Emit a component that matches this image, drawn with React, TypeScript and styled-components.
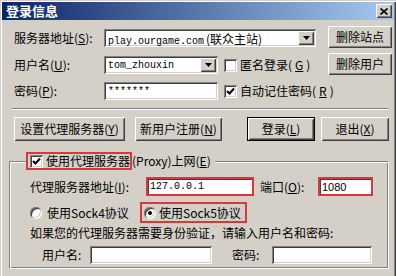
import React from 'react';
import styled, { createGlobalStyle, css } from 'styled-components';

const GlobalStyle = createGlobalStyle`
  html, body {
    margin: 0;
    padding: 0;
    background: #d4d0c8;
  }
  body {
    font-family: "Noto Sans CJK SC", "Liberation Sans", sans-serif;
    font-size: 12px;
    color: #000;
  }
`;

const raised = css`
  background: #d4d0c8;
  box-shadow: inset 1px 1px #fff, inset -1px -1px #404040, inset 2px 2px #d4d0c8,
    inset -2px -2px #808080;
`;

const sunken = css`
  background: #fff;
  box-shadow: inset 1px 1px #808080, inset -1px -1px #fff, inset 2px 2px #404040,
    inset -2px -2px #d4d0c8;
`;

const Window = styled.div`
  width: 396px;
  height: 276px;
  box-sizing: border-box;
  padding: 2px 2px 0;
  background: #d4d0c8;
  box-shadow: inset 1px 1px #d4d0c8, inset 2px 2px #fff, inset -1px 0 #404040,
    inset -2px 0 #808080;
  display: flex;
  flex-direction: column;
  overflow: hidden;
`;

const TitleBar = styled.div`
  height: 18px;
  flex: none;
  display: flex;
  align-items: center;
  justify-content: space-between;
  padding: 0 2px 0 4px;
  background: linear-gradient(to right, #0a246a, #a6caf0);
`;

const Title = styled.span`
  color: #fff;
  font-weight: bold;
  font-size: 13px;
  line-height: 16px;
`;

const CloseButton = styled.div`
  ${raised};
  width: 16px;
  height: 14px;
  display: flex;
  align-items: center;
  justify-content: center;
`;

const Body = styled.div`
  padding: 6px 4px 0 12px;
  display: flex;
  flex-direction: column;
`;

const TopGrid = styled.div`
  display: grid;
  grid-template-columns: 90px 120px 104px 64px;
  grid-template-rows: 24px 24px 22px;
  row-gap: 3px;
  align-items: center;
`;

const Label = styled.span<{ $w?: number; $gap?: number }>`
  display: inline-block;
  flex: none;
  width: ${(p) => (p.$w ? `${p.$w}px` : 'auto')};
  margin-left: ${(p) => p.$gap ?? 0}px;
  line-height: 14px;
  white-space: nowrap;
`;

const Field = styled.div<{ $w: number; $h?: number }>`
  ${sunken};
  box-sizing: border-box;
  flex: none;
  width: ${(p) => p.$w}px;
  height: ${(p) => p.$h ?? 18}px;
  padding: 0 3px 0 4px;
  display: flex;
  align-items: center;
  font-family: "Liberation Mono", "Noto Sans CJK SC", monospace;
  font-size: 10px;
  white-space: nowrap;
  overflow: hidden;
`;

const ComboField = styled(Field)<{ $span?: boolean }>`
  grid-column: ${(p) => (p.$span ? 'span 2' : 'auto')};
  justify-content: space-between;
  padding-right: 2px;
`;

const Cjk = styled.span`
  font-family: "Noto Sans CJK SC", sans-serif;
  font-size: 12px;
  margin-left: 2px;
`;

const DropButton = styled.div`
  ${raised};
  width: 16px;
  height: 14px;
  flex: none;
  display: flex;
  align-items: center;
  justify-content: center;
`;

const RedField = styled(Field)`
  height: 19px;
  border: 2px solid #d6393d;
  box-shadow: inset 1px 1px #404040;
  padding-left: 2px;
`;

const PortText = styled.span`
  font-family: "Liberation Sans", sans-serif;
  font-size: 11px;
`;

const Button = styled.div<{ $w: number; $h?: number; $default?: boolean; $gap?: number }>`
  ${raised};
  box-sizing: border-box;
  flex: none;
  width: ${(p) => p.$w}px;
  height: ${(p) => p.$h ?? 24}px;
  margin-left: ${(p) => p.$gap ?? 0}px;
  display: flex;
  align-items: center;
  justify-content: center;
  line-height: 14px;
  white-space: nowrap;
  ${(p) =>
    p.$default &&
    css`
      box-shadow: inset 0 0 0 1px #000, inset 2px 2px #fff, inset -2px -2px #404040,
        inset 3px 3px #d4d0c8, inset -3px -3px #808080;
    `}
`;

const SideButton = styled(Button)`
  align-self: start;
`;

const CheckOption = styled.label`
  display: flex;
  align-items: center;
  gap: 3px;
  line-height: 14px;
  white-space: nowrap;
`;

const Box = styled.span`
  ${sunken};
  width: 13px;
  height: 13px;
  flex: none;
  display: inline-flex;
  align-items: center;
  justify-content: center;
`;

const Separator = styled.div`
  margin: 6px 0 0 -2px;
  width: 376px;
  height: 0;
  border-top: 1px solid #808080;
  border-bottom: 1px solid #fff;
`;

const ButtonRow = styled.div`
  display: flex;
  margin-top: 7px;
`;

const Group = styled.fieldset`
  margin: 11px 0 0 -5px;
  padding: 0;
  width: 380px;
  box-sizing: border-box;
  border: 1px solid;
  border-color: #808080 #fff #fff #808080;
  box-shadow: inset 1px 1px #fff, inset -1px -1px #808080;
`;

const Legend = styled.legend`
  margin-left: 16px;
  padding: 0 4px 0 0;
  background: #d4d0c8;
  display: flex;
  align-items: center;
  line-height: 14px;
  white-space: nowrap;
`;

const RedBox = styled.span<{ $pad?: number }>`
  display: inline-flex;
  align-items: center;
  box-sizing: border-box;
  height: ${(p) => (p.$pad ? 21 : 18)}px;
  border: 2px solid #d6393d;
  padding: 0 ${(p) => p.$pad ?? 0}px 0 2px;
  gap: 3px;
`;

const Inner = styled.div`
  padding: 7px 0 4px 20px;
  display: flex;
  flex-direction: column;
`;

const Row = styled.div<{ $top?: number; $indent?: number }>`
  display: flex;
  align-items: center;
  margin-top: ${(p) => p.$top ?? 0}px;
  padding-left: ${(p) => p.$indent ?? 0}px;
`;

const RadioOption = styled.span<{ $w?: number }>`
  display: inline-flex;
  align-items: center;
  gap: 5px;
  width: ${(p) => (p.$w ? `${p.$w}px` : 'auto')};
  line-height: 14px;
  white-space: nowrap;
`;

const Radio = styled.span`
  width: 12px;
  height: 12px;
  flex: none;
  border-radius: 50%;
  background: #fff;
  box-shadow: inset 1px 1px #808080, inset -1px -1px #fff, inset 2px 2px #404040,
    inset -2px -2px #d4d0c8;
  display: inline-flex;
  align-items: center;
  justify-content: center;
`;

const Dot = styled.span`
  width: 4px;
  height: 4px;
  border-radius: 50%;
  background: #000;
`;

const Hint = styled.div`
  margin-top: 3px;
  line-height: 14px;
  white-space: nowrap;
`;

const Check = () => (
  <svg width="9" height="9" viewBox="0 0 9 9">
    <path d="M1 4 L3.5 6.5 L8 1.5" fill="none" stroke="#000" strokeWidth="2" />
  </svg>
);

const Arrow = () => (
  <svg width="7" height="4" viewBox="0 0 7 4">
    <path d="M0 0 H7 L3.5 4 Z" fill="#000" />
  </svg>
);

const Cross = () => (
  <svg width="8" height="7" viewBox="0 0 8 7">
    <path d="M0.5 0.5 L7.5 6.5 M7.5 0.5 L0.5 6.5" stroke="#000" strokeWidth="1.6" />
  </svg>
);

const Key = ({ c }: { c: string }) => (
  <>
    (<u>{c}</u>)
  </>
);

export default function App() {
  return (
    <Window>
      <GlobalStyle />
      <TitleBar>
        <Title>登录信息</Title>
        <CloseButton>
          <Cross />
        </CloseButton>
      </TitleBar>
      <Body>
        <TopGrid>
          <Label>
            服务器地址<Key c="S" />:
          </Label>
          <ComboField $w={212} $span>
            <span>
              play.ourgame.com<Cjk>(联众主站)</Cjk>
            </span>
            <DropButton>
              <Arrow />
            </DropButton>
          </ComboField>
          <SideButton $w={64} $h={22}>
            删除站点
          </SideButton>

          <Label>
            用户名<Key c="U" />:
          </Label>
          <ComboField $w={114}>
            <span>tom_zhouxin</span>
            <DropButton>
              <Arrow />
            </DropButton>
          </ComboField>
          <CheckOption>
            <Box />
            匿名登录<Key c="G" />
          </CheckOption>
          <SideButton $w={64} $h={22}>
            删除用户
          </SideButton>

          <Label>
            密码<Key c="P" />:
          </Label>
          <Field $w={114}>*******</Field>
          <CheckOption>
            <Box>
              <Check />
            </Box>
            自动记住密码<Key c="R" />
          </CheckOption>
        </TopGrid>

        <Separator />

        <ButtonRow>
          <Button $w={111}>
            设置代理服务器<Key c="Y" />
          </Button>
          <Button $w={87} $gap={10}>
            新用户注册<Key c="N" />
          </Button>
          <Button $w={68} $gap={25} $default>
            登录<Key c="L" />
          </Button>
          <Button $w={68} $gap={6}>
            退出<Key c="X" />
          </Button>
        </ButtonRow>

        <Group>
          <Legend>
            <RedBox>
              <Box>
                <Check />
              </Box>
              使用代理服务器
            </RedBox>
            (Proxy)上网<Key c="E" />
          </Legend>
          <Inner>
            <Row>
              <Label $w={116}>
                代理服务器地址<Key c="I" />:
              </Label>
              <RedField $w={108}>127.0.0.1</RedField>
              <Label $w={58} $gap={6}>
                端口<Key c="O" />:
              </Label>
              <RedField $w={55}>
                <PortText>1080</PortText>
              </RedField>
            </Row>
            <Row $top={6}>
              <RadioOption $w={110}>
                <Radio />
                使用Sock4协议
              </RadioOption>
              <RedBox $pad={4}>
                <Radio>
                  <Dot />
                </Radio>
                使用Sock5协议
              </RedBox>
            </Row>
            <Hint>如果您的代理服务器需要身份验证，请输入用户名和密码:</Hint>
            <Row $top={6} $indent={12}>
              <Label $w={48}>用户名:</Label>
              <Field $w={122} />
              <Label $w={40} $gap={20}>
                密码:
              </Label>
              <Field $w={100} />
            </Row>
          </Inner>
        </Group>
      </Body>
    </Window>
  );
}
